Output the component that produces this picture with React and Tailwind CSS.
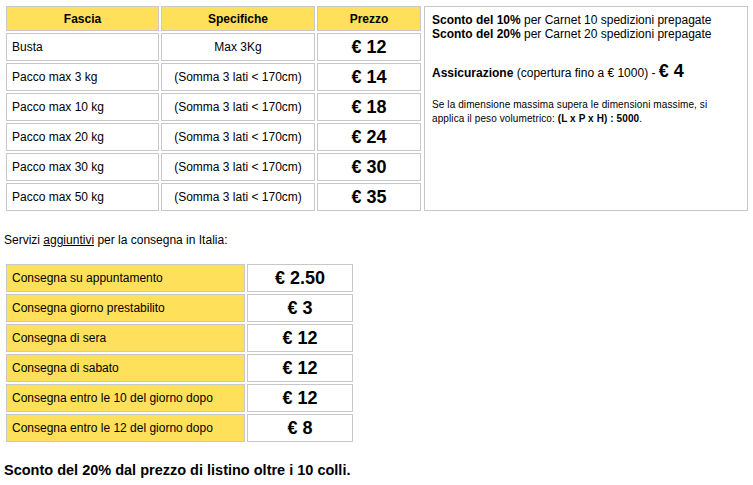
const rows = [
  ['Busta', 'Max 3Kg', '€ 12'],
  ['Pacco max 3 kg', '(Somma 3 lati < 170cm)', '€ 14'],
  ['Pacco max 10 kg', '(Somma 3 lati < 170cm)', '€ 18'],
  ['Pacco max 20 kg', '(Somma 3 lati < 170cm)', '€ 24'],
  ['Pacco max 30 kg', '(Somma 3 lati < 170cm)', '€ 30'],
  ['Pacco max 50 kg', '(Somma 3 lati < 170cm)', '€ 35'],
]

const servizi = [
  ['Consegna su appuntamento', '€ 2.50'],
  ['Consegna giorno prestabilito', '€ 3'],
  ['Consegna di sera', '€ 12'],
  ['Consegna di sabato', '€ 12'],
  ['Consegna entro le 10 del giorno dopo', '€ 12'],
  ['Consegna entro le 12 del giorno dopo', '€ 8'],
]

const cell = 'flex items-center border border-[#c8c8c8]'
const yellow = 'bg-[#ffe05a]'

export default function App() {
  return (
    <div className="w-[753px] h-[485px] bg-white text-black text-[12px] font-['Liberation_Sans',Arial,sans-serif] overflow-hidden">
      <div className="flex gap-[3px] pt-[6px] pl-[6px]">
        <div className="grid grid-cols-[153px_154px_104px] grid-rows-[25px_repeat(6,28px)] gap-[2px]">
          <div className={`${cell} ${yellow} justify-center font-bold`}>Fascia</div>
          <div className={`${cell} ${yellow} justify-center font-bold`}>Specifiche</div>
          <div className={`${cell} ${yellow} justify-center font-bold`}>Prezzo</div>
          {rows.map(([a, b, c]) => (
            <div key={a} className="contents">
              <div className={`${cell} px-[5px]`}>{a}</div>
              <div className={`${cell} justify-center`}>{b}</div>
              <div className={`${cell} justify-center text-[18px] font-bold`}>{c}</div>
            </div>
          ))}
        </div>
        <div className="w-[324px] h-[205px] border border-[#c8c8c8] px-[7px] pt-[6px]">
          <p className="leading-[14px]">
            <b>Sconto del 10%</b> per Carnet 10 spedizioni prepagate
          </p>
          <p className="leading-[14px]">
            <b>Sconto del 20%</b> per Carnet 20 spedizioni prepagate
          </p>
          <p className="mt-[19px] leading-[22px]">
            <b>Assicurazione</b> (copertura fino a € 1000) - <b className="text-[18px]">€ 4</b>
          </p>
          <p className="mt-[14px] text-[10px] tracking-[0.1px] leading-[14px] whitespace-nowrap">
            Se la dimensione massima supera le dimensioni massime, si
            <br />
            applica il peso volumetrico: <b>(L x P x H) : 5000</b>.
          </p>
        </div>
      </div>

      <p className="mt-[22px] pl-[4px] leading-[14px]">
        Servizi <span className="underline">aggiuntivi</span> per la consegna in Italia:
      </p>

      <div className="mt-[17px] ml-[6px] grid grid-cols-[239px_106px] auto-rows-[28px] gap-[2px] w-fit">
        {servizi.map(([a, b]) => (
          <div key={a} className="contents">
            <div className={`${cell} ${yellow} px-[5px]`}>{a}</div>
            <div className={`${cell} justify-center text-[18px] font-bold`}>{b}</div>
          </div>
        ))}
      </div>

      <p className="mt-[20px] pl-[4px] text-[14.5px] font-bold leading-[16px]">
        Sconto del 20% dal prezzo di listino oltre i 10 colli.
      </p>
    </div>
  )
}
